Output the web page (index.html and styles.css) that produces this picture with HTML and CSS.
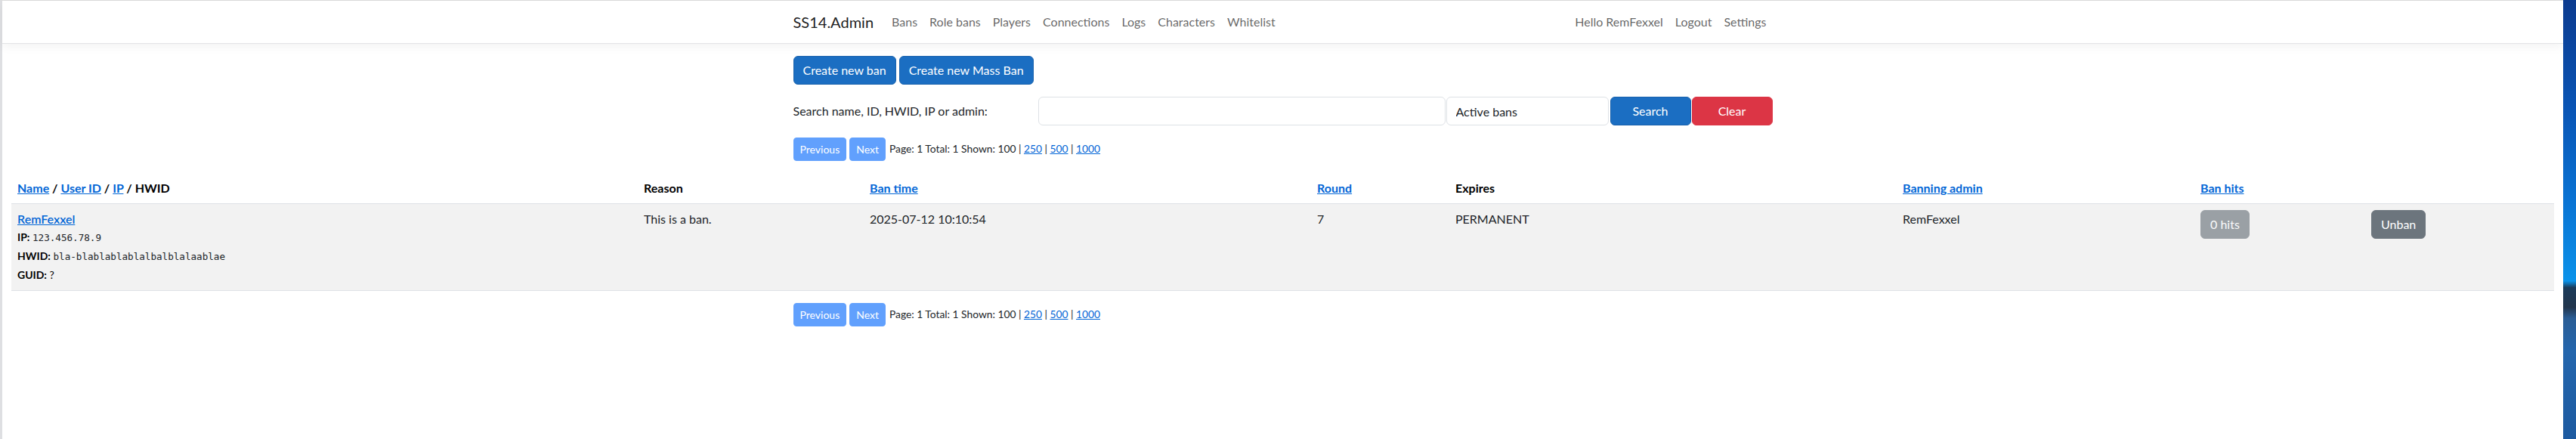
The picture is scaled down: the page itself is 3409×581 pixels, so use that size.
FILE: index.html
```html
<!DOCTYPE html>
<html lang="en">
<head>
<meta charset="utf-8">
<title>Bans - SS14.Admin</title>
<link rel="stylesheet" href="styles.css">
</head>
<body>
<div class="window">
  <header class="navbar">
    <div class="container nav-inner">
      <a class="brand" href="#">SS14.Admin</a>
      <ul class="nav">
        <li><a class="nav-link" href="#">Bans</a></li>
        <li><a class="nav-link" href="#">Role bans</a></li>
        <li><a class="nav-link" href="#">Players</a></li>
        <li><a class="nav-link" href="#">Connections</a></li>
        <li><a class="nav-link" href="#">Logs</a></li>
        <li><a class="nav-link" href="#">Characters</a></li>
        <li><a class="nav-link" href="#">Whitelist</a></li>
      </ul>
      <ul class="nav nav-right">
        <li><span class="nav-link">Hello RemFexxel</span></li>
        <li><a class="nav-link" href="#">Logout</a></li>
        <li><a class="nav-link" href="#">Settings</a></li>
      </ul>
    </div>
  </header>
  <main>
    <div class="container">
      <div class="actions">
        <a class="btn btn-primary" href="#">Create new ban</a>
        <a class="btn btn-primary" href="#">Create new Mass Ban</a>
      </div>
      <form class="search-row">
        <label class="search-label">Search name, ID, HWID, IP or admin:</label>
        <input class="form-control search-input" type="text">
        <select class="form-control search-select"><option>Active bans</option></select>
        <button class="btn btn-primary btn-search" type="button">Search</button>
        <button class="btn btn-danger btn-clear" type="button">Clear</button>
      </form>
      <div class="pager">
        <span class="btn btn-sm btn-pager disabled">Previous</span>
        <span class="btn btn-sm btn-pager disabled">Next</span>
        <span class="pager-text">Page: 1 Total: 1 Shown: 100 | <a href="#">250</a> | <a href="#">500</a> | <a href="#">1000</a></span>
      </div>
    </div>
    <div class="table-wrap">
      <table class="bans">
        <colgroup>
          <col class="c-name"><col class="c-reason"><col class="c-time"><col class="c-round"><col class="c-expires"><col class="c-admin"><col class="c-hits"><col class="c-action">
        </colgroup>
        <thead>
          <tr>
            <th><a href="#">Name</a> / <a href="#">User ID</a> / <a href="#">IP</a> / HWID</th>
            <th>Reason</th>
            <th><a href="#">Ban time</a></th>
            <th><a href="#">Round</a></th>
            <th>Expires</th>
            <th><a href="#">Banning admin</a></th>
            <th><a href="#">Ban hits</a></th>
            <th></th>
          </tr>
        </thead>
        <tbody>
          <tr>
            <td>
              <div class="line"><a class="player" href="#">RemFexxel</a></div>
              <div class="line sub"><b>IP:</b> <code>123.456.78.9</code></div>
              <div class="line sub"><b>HWID:</b> <code>bla-blablablablalbalblalaablae</code></div>
              <div class="line sub"><b>GUID:</b> ?</div>
            </td>
            <td>This is a ban.</td>
            <td>2025-07-12 10:10:54</td>
            <td>7</td>
            <td>PERMANENT</td>
            <td>RemFexxel</td>
            <td><span class="btn btn-hits disabled">0 hits</span></td>
            <td><button class="btn btn-secondary" type="button">Unban</button></td>
          </tr>
        </tbody>
      </table>
    </div>
    <div class="container">
      <div class="pager pager-bottom">
        <span class="btn btn-sm btn-pager disabled">Previous</span>
        <span class="btn btn-sm btn-pager disabled">Next</span>
        <span class="pager-text">Page: 1 Total: 1 Shown: 100 | <a href="#">250</a> | <a href="#">500</a> | <a href="#">1000</a></span>
      </div>
    </div>
  </main>
</div>
<div class="wallpaper"></div>
</body>
</html>
```

FILE: styles.css
```css
* { box-sizing: border-box; }

html, body { height: 100%; }

body {
  margin: 0;
  display: flex;
  font-family: Lato, "Liberation Sans", sans-serif;
  font-size: 16px;
  line-height: 1.5;
  color: #212529;
  background: #ffffff;
}

.window {
  flex: 1;
  min-width: 0;
  border-left: 3px solid #dedfe2;
  border-top: 1px solid #dcdcdc;
  background: #ffffff;
}

.wallpaper {
  width: 17px;
  flex: none;
  background: linear-gradient(180deg,
    #0c3b8f 0%,
    #0a55b5 25%,
    #0a72d2 45%,
    #0b8be4 60%,
    #0a93ea 64%,
    #1b3b5a 65.5%,
    #22364d 70%,
    #2a5d95 72.5%,
    #2466ad 80%,
    #1d5aa0 100%);
}

a { color: #0366d6; }

.container {
  width: 1320px;
  margin: 0 auto;
  padding: 0 12px;
}

/* navbar */
.navbar {
  padding: 8px 0;
  border-bottom: 1px solid #e3e4e6;
  box-shadow: 0 4px 12px rgba(0, 0, 0, 0.05);
  margin-bottom: 16px;
}

.nav-inner {
  display: flex;
  align-items: center;
}

.brand {
  font-size: 20px;
  line-height: 30px;
  padding: 5px 0;
  margin-right: 16px;
  color: rgba(0, 0, 0, 0.9);
  text-decoration: none;
}

.nav {
  display: flex;
  list-style: none;
  margin: 0;
  padding: 0;
}

.nav-right { margin-left: auto; }

.nav-link {
  display: block;
  padding: 8px;
  color: rgba(0, 0, 0, 0.62);
  text-decoration: none;
  line-height: 24px;
}

/* buttons */
.btn {
  display: inline-block;
  font-family: inherit;
  font-size: 16px;
  line-height: 24px;
  padding: 6px 12px;
  border: 1px solid transparent;
  border-radius: 6px;
  text-align: center;
  text-decoration: none;
  color: #ffffff;
  cursor: pointer;
  vertical-align: middle;
}

.btn-primary { background: #1b6ec2; border-color: #1861ac; }
.btn-danger { background: #dc3545; border-color: #dc3545; }
.btn-secondary { background: #6c757d; border-color: #6c757d; }

.btn-sm {
  font-size: 14px;
  line-height: 21px;
  padding: 4px 8px;
  border-radius: 4px;
}

.btn-pager { background: #0d6efd; border-color: #0d6efd; }
.btn-hits { background: #6c757d; border-color: #6c757d; }
.disabled { opacity: 0.65; pointer-events: none; }

.actions {
  display: flex;
  gap: 4px;
  margin-bottom: 16px;
}

/* search */
.search-row {
  display: flex;
  align-items: center;
  margin: 0 0 16px;
}

.search-label {
  width: 324px;
  flex: none;
}

.form-control {
  height: 38px;
  font-family: inherit;
  font-size: 16px;
  color: #212529;
  padding: 6px 12px;
  border: 1px solid #dee2e6;
  border-radius: 6px;
  background: #ffffff;
}

.search-input { width: 539px; flex: none; }

.search-select {
  width: 215px;
  flex: none;
  margin-left: 1px;
  appearance: none;
  -webkit-appearance: none;
}

.btn-search { width: 107px; margin-left: 2px; }
.btn-clear { width: 107px; margin-left: 1px; }

/* pager */
.pager {
  display: flex;
  align-items: center;
  gap: 4px;
  margin-bottom: 16px;
}

.pager-text {
  font-size: 13.8px;
  margin-left: 1px;
}

.pager-bottom { margin-top: 16px; }

/* table */
.table-wrap { padding: 0 12px; }

.bans {
  width: 100%;
  table-layout: fixed;
  border-collapse: collapse;
}

.c-name { width: 829px; }
.c-reason { width: 299px; }
.c-time { width: 592px; }
.c-round { width: 183px; }
.c-expires { width: 592px; }
.c-admin { width: 394px; }
.c-hits { width: 226px; }
.c-action { width: 250px; }

.bans th {
  text-align: left;
  font-weight: 700;
  padding: 8px;
  border-bottom: 1px solid #dee2e6;
  color: #000000;
}

.bans td {
  padding: 8px;
  vertical-align: top;
  background: #f2f2f2;
  border-bottom: 1px solid #dee2e6;
  color: #212529;
  font-weight: 400;
}

.line { line-height: 24px; }

.player { font-weight: 600; }

.sub { font-size: 14px; color: #000000; }

.sub b { font-weight: 700; }

code {
  font-family: "DejaVu Sans Mono", "Liberation Mono", monospace;
  font-size: 12.6px;
  color: #212529;
}
```
